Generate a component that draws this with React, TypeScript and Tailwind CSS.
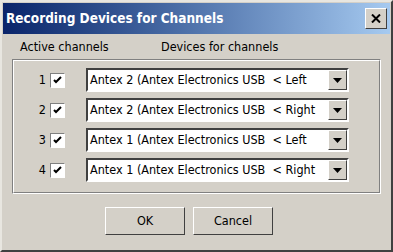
import { FC } from "react"

const rows = [
  { n: 1, device: "Antex 2 (Antex Electronics USB  < Left" },
  { n: 2, device: "Antex 2 (Antex Electronics USB  < Right" },
  { n: 3, device: "Antex 1 (Antex Electronics USB  < Left" },
  { n: 4, device: "Antex 1 (Antex Electronics USB  < Right" },
]

const font = { fontFamily: "'DejaVu Sans Condensed', 'Liberation Sans', sans-serif" }

const Check: FC = () => (
  <div className="w-[15px] h-[15px] bg-white border border-t-[#808080] border-l-[#808080] border-b-white border-r-white flex items-center justify-center">
    <svg width="9" height="8" viewBox="0 0 9 8">
      <path d="M1 4 L3 6 L8 1" stroke="#000" strokeWidth="2" fill="none" />
    </svg>
  </div>
)

const Combo: FC<{ text: string }> = ({ text }) => (
  <div className="w-[263px] h-[24px] bg-white border-2 border-t-[#404040] border-l-[#404040] border-b-white border-r-white flex items-center">
    <span className="flex-1 pl-[2px] text-[12.5px] text-black whitespace-pre overflow-hidden">{text}</span>
    <div className="w-[19px] h-[20px] bg-[#d4d0c8] border border-t-white border-l-white border-b-[#404040] border-r-[#404040] flex items-center justify-center">
      <svg width="9" height="5" viewBox="0 0 9 5">
        <path d="M0 0 H9 L4.5 5 Z" fill="#000" />
      </svg>
    </div>
  </div>
)

const Button: FC<{ label: string }> = ({ label }) => (
  <button className="w-[80px] h-[28px] bg-[#d4d0c8] border border-t-white border-l-white border-b-[#404040] border-r-[#404040] text-[12.5px] text-black">
    {label}
  </button>
)

export default function App() {
  return (
    <div
      className="w-[393px] h-[252px] bg-[#d4d0c8] border-2 border-t-[#e8e6e0] border-l-[#e8e6e0] border-b-[#404040] border-r-[#404040] flex flex-col"
      style={font}
    >
      <div className="mx-[1px] mt-[1px] h-[31px] bg-gradient-to-r from-[#0a246a] to-[#a6caf0] flex items-center justify-between pl-[3px] pr-[3px]">
        <span className="text-white font-bold text-[13.5px]">Recording Devices for Channels</span>
        <div className="w-[22px] h-[21px] bg-[#d4d0c8] border border-t-white border-l-white border-b-[#404040] border-r-[#404040] flex items-center justify-center">
          <svg width="10" height="9" viewBox="0 0 10 9">
            <path d="M1 0.5 L9 8.5 M9 0.5 L1 8.5" stroke="#000" strokeWidth="2" />
          </svg>
        </div>
      </div>
      <div className="flex text-[12.5px] text-black pl-[18px] pt-[4px] h-[22px]">
        <span className="w-[141px]">Active channels</span>
        <span>Devices for channels</span>
      </div>
      <div className="mx-[10px] mt-[3px] h-[135px] border border-t-[#808080] border-l-[#808080] border-b-white border-r-white">
        <div className="h-full border border-t-white border-l-white border-b-[#808080] border-r-[#808080] flex flex-col gap-[6px] pt-[7px] pl-[20px]">
          {rows.map((r) => (
            <div key={r.n} className="flex items-center h-[24px]">
              <span className="text-[12.5px] w-[12px] text-right mr-[4px]">{r.n}</span>
              <Check />
              <div className="w-[21px]" />
              <Combo text={r.device} />
            </div>
          ))}
        </div>
      </div>
      <div className="flex gap-[8px] mt-[13px] pl-[103px]">
        <Button label="OK" />
        <Button label="Cancel" />
      </div>
    </div>
  )
}
